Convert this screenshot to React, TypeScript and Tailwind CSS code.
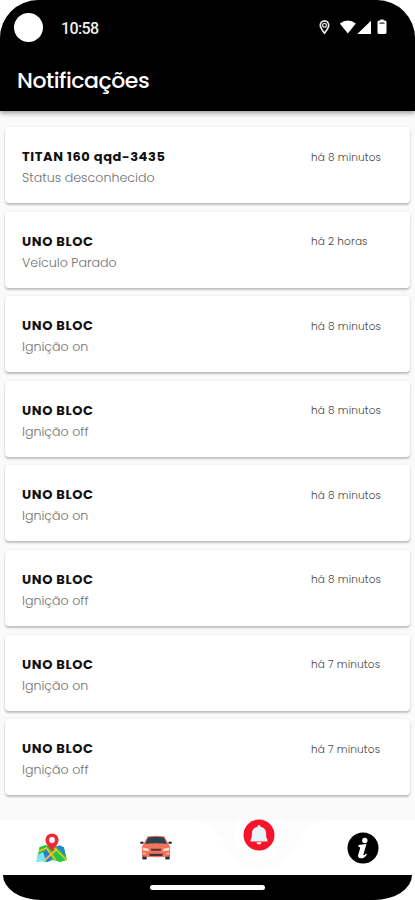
import React from "react";

type Item = { title: string; text: string; time: string };

const items: Item[] = [
  { title: "TITAN 160 qqd-3435", text: "Status desconhecido", time: "há 8 minutos" },
  { title: "UNO BLOC", text: "Veículo Parado", time: "há 2 horas" },
  { title: "UNO BLOC", text: "Ignição on", time: "há 8 minutos" },
  { title: "UNO BLOC", text: "Ignição off", time: "há 8 minutos" },
  { title: "UNO BLOC", text: "Ignição on", time: "há 8 minutos" },
  { title: "UNO BLOC", text: "Ignição off", time: "há 8 minutos" },
  { title: "UNO BLOC", text: "Ignição on", time: "há 7 minutos" },
  { title: "UNO BLOC", text: "Ignição off", time: "há 7 minutos" },
];

function StatusIcons() {
  return (
    <svg className="h-[18px] w-[72px]" viewBox="0 0 72 18" fill="none">
      <path d="M6.500 15.200C4.100 12.200 2.300 9.700 2.300 7.300a4.200 4.400 0 0 1 8.400 0c0 2.400-1.800 4.900-4.200 7.900Z" stroke="#e8e8e8" strokeWidth="1.700" />
      <circle cx="6.500" cy="7.200" r="1.900" stroke="#d8d8d8" strokeWidth="1.300" />
      <path d="M21.800 5.600Q29.800-.4 37.800 5.600L29.800 15.400Z" fill="#fff" />
      <path d="M53 2.800V16H39.300Z" fill="#fff" />
      <path d="M61 2.500h1.300v-1h3.400v1h1.300q1.500 0 1.500 1.500v10.600q0 1.400-1.400 1.400h-6.200q-1.400 0-1.400-1.400V4q0-1.500 1.500-1.500Z" fill="#fff" />
      <path d="M61.500 4.500h5v1.200h-5z" fill="#333" />
    </svg>
  );
}

function MapIcon() {
  return (
    <svg className="h-8 w-8" viewBox="0 0 32 32">
      <path d="m3.500 14 6-2 7 2.500 7-2 4.300 1.700L31 27l-7 2-7-2-7.500 2-4-1.500L.5 29Z" fill="#22c83f" />
      <path d="m1.500 22 6-3 3 9-4 .5L.5 29Z" fill="#7fe4f7" />
      <path d="m7 19 3.500-2.500 5 7.500-1 4-4 1Z" fill="#2d7fd3" />
      <path d="m20 13.500 3.500-1 4.300 1.700 2.200 9Z" fill="#2b83d4" />
      <path d="m2.500 18.500 8-3.500 9.500 12.500M17 13.500 30.500 27M9 27l12-11" stroke="#f5bd2f" strokeWidth="1.700" fill="none" />
      <path d="M16 18C12.300 13.500 9.400 10.600 9.400 7a6.600 6.600 0 0 1 13.200 0c0 3.600-2.900 6.500-6.600 11Z" fill="#ee2836" />
      <circle cx="16" cy="7" r="2.900" fill="#fff" />
    </svg>
  );
}

function CarIcon() {
  return (
    <svg className="h-8 w-8" viewBox="0 0 32 32">
      <rect x="2.300" y="22" width="4.500" height="5.500" rx="1.300" fill="#26303f" />
      <rect x="25.200" y="22" width="4.500" height="5.500" rx="1.300" fill="#26303f" />
      <ellipse cx="1.900" cy="10.700" rx="1.900" ry="1.300" fill="#303744" />
      <ellipse cx="30.100" cy="10.700" rx="1.900" ry="1.300" fill="#303744" />
      <path d="M7.500 4.500Q16 3.200 24.500 4.500L28.500 12l1.800 3-.6 9.500q-13.700 1.500-27.400 0L1.700 15l1.800-3Z" fill="#f4735b" />
      <path d="M8.300 5.300Q16 4.300 23.700 5.300L27 11.800q-11-1.300-22 0Z" fill="#28434f" />
      <path d="m2.500 15.500 6 1.300.7 2.500-6.200-.8ZM29.500 15.500l-6 1.300-.7 2.500 6.200-.8Z" fill="#ffe0c8" />
      <path d="M10.500 16.700h11l-.8 2h-9.400Z" fill="#5a3037" />
      <path d="M8.500 21.700h15l-1.500 2.200H10Z" fill="#49313b" />
      <path d="M3 21.500h3M26 21.500h3" stroke="#ffc4a4" />
    </svg>
  );
}

function BellIcon() {
  return (
    <svg className="h-8 w-8" viewBox="0 0 32 32">
      <circle cx="16" cy="16" r="15.500" fill="#f5142b" />
      <path d="M16 6q1.500 0 1.500 1.700c3.900.8 5.600 3.300 5.600 6.900 0 3.600.2 4.600 1.300 6.100v1.900H7.600v-1.900c1.100-1.500 1.300-2.500 1.300-6.100 0-3.600 1.700-6.100 5.600-6.900Q14.500 6 16 6ZM13.500 23.300h5a2.500 2.200 0 0 1-5 0Z" fill="#e8f3f5" />
    </svg>
  );
}

function InfoIcon() {
  return (
    <svg className="h-8 w-8" viewBox="0 0 32 32">
      <circle cx="16" cy="16" r="15.500" fill="#000" />
      <circle cx="17.800" cy="8.500" r="2.700" fill="#fff" />
      <path d="M11.500 12.900q3.900-.2 8-.9l-2.900 9.800q-.5 1.900.5 1.500.8-.3 1.900-1.700l1 .8q-2.700 3.900-5.900 3.900-4 0-2.800-4.100l1.700-5.400q.5-1.900-1.500-2Z" fill="#fff" />
    </svg>
  );
}

export default function App() {
  return (
    <div className="h-[900px] w-[415px] overflow-hidden bg-white font-['Poppins','Inter',sans-serif]">
      <div className="flex h-full flex-col overflow-hidden rounded-t-[38px] bg-[#fafafa]">
        <header className="z-10 h-[111px] shrink-0 bg-black text-white shadow-[0_2px_5px_rgba(0,0,0,0.4)]">
          <div className="flex h-[55px] items-center pl-[14px] pr-[24px]">
            <div className="size-[29px] rounded-full bg-white" />
            <span className="ml-[18px] mt-[2px] font-['Roboto',sans-serif] text-[16px] font-medium leading-5 tracking-[-0.6px] text-[#eee]">10:58</span>
            <div className="ml-auto mr-[1px] -mt-[1px]"><StatusIcons /></div>
          </div>
          <h1 className="ml-[17px] mt-[11px] whitespace-nowrap text-[22px] font-medium leading-[30px] tracking-[-0.45px]">Notificações</h1>
        </header>

        <main className="flex flex-1 flex-col gap-[8.600px] px-[5px] pt-[16px]">
          {items.map((item, i) => (
            <article key={i} className="flex h-[76px] shrink-0 justify-between rounded-[4px] bg-white pl-[17px] pt-[19px] shadow-[0_2px_2px_rgba(0,0,0,0.22),0_0_3px_rgba(0,0,0,0.07)]">
              <div className="whitespace-nowrap">
                <h2 className="text-[13px] font-bold leading-[21px] tracking-[0.6px] text-[#111]">{item.title}</h2>
                <p className="mt-[1px] text-[12.650px] font-light leading-[20px] text-[#707070]">{item.text}</p>
              </div>
              <time className="mt-[2.500px] w-[99px] whitespace-nowrap text-[10.500px] font-light leading-[18px] tracking-[0.15px] text-[#444]">{item.time}</time>
            </article>
          ))}
        </main>

        <nav className="relative grid h-[55px] shrink-0 grid-cols-4 bg-white">
          <svg className="absolute inset-0 h-[55px] w-[415px]" viewBox="0 0 415 55">
            <path d="M185 0C211 0 216 11 224 24C231 39 243 49 260 49C277 49 289 39 296 24C304 10 309 0 335 0Z" fill="#fcfcfc" />
            <circle cx="260" cy="15" r="26" fill="#fff" />
          </svg>
          <button className="relative flex justify-center pt-[13px]"><MapIcon /></button>
          <button className="relative flex justify-center pt-[12px]"><CarIcon /></button>
          <button className="relative flex justify-center"><span className="-mt-px"><BellIcon /></span></button>
          <button className="relative flex justify-center pt-[12px]"><InfoIcon /></button>
        </nav>
        <footer className="h-[25px] shrink-0 bg-white px-[3px]">
          <div className="flex h-full justify-center rounded-b-[38px_25px] bg-black pt-[10px]">
            <div className="h-[5px] w-[115px] rounded-full bg-white" />
          </div>
        </footer>
      </div>
    </div>
  );
}
